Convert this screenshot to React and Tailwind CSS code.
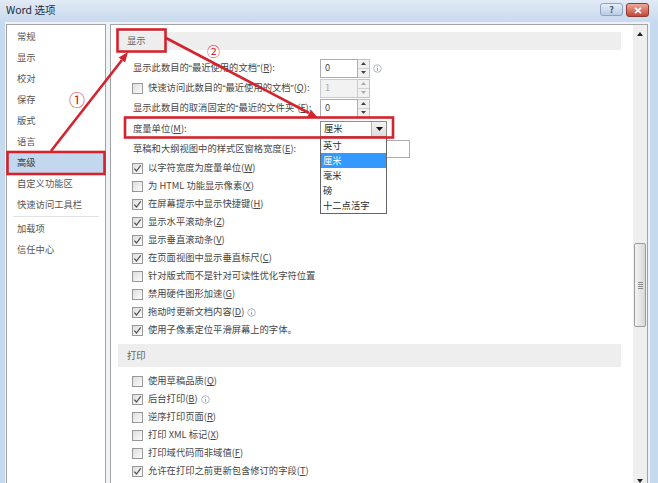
const cjk = "font-['Noto_Sans_CJK_SC',sans-serif]";

function K({ k }) {
  return (
    <>
      (<span className="underline">{k}</span>)
    </>
  );
}

function Q({ children }) {
  return <span className="font-['Liberation_Sans',sans-serif]">{children}</span>;
}

function Check({ on }) {
  return (
    <span className="flex h-[11px] w-[11px] shrink-0 items-center justify-center border border-[#979898] bg-gradient-to-br from-[#dedede] to-[#fbfbfb]">
      {on && (
        <svg width="9" height="9" viewBox="0 0 9 9">
          <path d="M1.4 4.6 L3.5 7 L7.7 1.4" fill="none" stroke="#505050" strokeWidth="1.2" />
        </svg>
      )}
    </span>
  );
}

function Info() {
  return (
    <svg width="9" height="9" viewBox="0 0 9 9" className="ml-[3px] shrink-0">
      <circle cx="4.5" cy="4.5" r="3.8" fill="none" stroke="#9aa7b8" strokeWidth="0.8" />
      <rect x="4.1" y="4" width="0.9" height="2.8" fill="#8a99ad" />
      <rect x="4.1" y="2.3" width="0.9" height="0.9" fill="#8a99ad" />
    </svg>
  );
}

function Spin({ value, disabled }) {
  return (
    <div className="flex h-[19px] w-[50px]">
      <div
        className={
          disabled
            ? "flex flex-1 items-center border border-[#c9cbd0] bg-[#f2f2f2] pl-[4px] text-[#a8a8a8]"
            : "flex flex-1 items-center border border-[#abadb3] bg-white pl-[4px]"
        }
      >
        {value}
      </div>
      <div className="flex w-[12px] flex-col border border-l-0 border-[#c2c2c2] bg-[#f1f1f1]">
        <div className="flex flex-1 items-center justify-center border-b border-[#d0d0d0]">
          <svg width="5" height="3" viewBox="0 0 5 3">
            <path d="M0 3 L2.5 0 L5 3 Z" fill={disabled ? "#aaaaaa" : "#444444"} />
          </svg>
        </div>
        <div className="flex flex-1 items-center justify-center">
          <svg width="5" height="3" viewBox="0 0 5 3">
            <path d="M0 0 L2.5 3 L5 0 Z" fill={disabled ? "#aaaaaa" : "#444444"} />
          </svg>
        </div>
      </div>
    </div>
  );
}

function CheckRow({ on, info, children }) {
  return (
    <div className="flex h-[18px] items-center pl-[14px]">
      <Check on={on} />
      <span className="ml-[5px] whitespace-nowrap">{children}</span>
      {info && <Info />}
    </div>
  );
}

const nav = ["常规", "显示", "校对", "保存", "版式", "语言", "高级", "自定义功能区", "快速访问工具栏"];

export default function App() {
  return (
    <div className={`relative h-[483px] w-[658px] overflow-hidden bg-[#c6daef] text-[9.3px] leading-none text-[#464646] ${cjk}`}>
      {/* title bar */}
      <div className="flex h-[22px] items-start bg-gradient-to-b from-[#e1eaf5] to-[#c9daee]">
        <span className="ml-[6px] mt-[5px] text-[10.5px] text-[#1d2b40]">Word 选项</span>
        <div className="ml-auto mr-[9px] mt-[3px] flex gap-[3px]">
          <div className="flex h-[13px] w-[23px] items-center justify-center rounded-[3px] border border-[#8ea3bf] bg-gradient-to-b from-[#e6eef8] to-[#b9cde5] text-[9px] font-bold text-[#3f587b]">
            ?
          </div>
          <div className="flex h-[14px] w-[23px] items-center justify-center rounded-[3px] border border-[#8d3b33] bg-gradient-to-b from-[#eba89c] to-[#c5443a]">
            <svg width="8" height="7" viewBox="0 0 8 7">
              <path d="M1 0.8 L7 6.2 M7 0.8 L1 6.2" stroke="#ffffff" strokeWidth="1.8" />
            </svg>
          </div>
        </div>
      </div>

      {/* body */}
      <div className="ml-[5px] mr-[8px] flex h-[468px] bg-[#eef3f9] pt-[2px]">
        {/* left nav */}
        <div className="ml-[1px] w-[100px] border border-[#a3a3a3] bg-white pt-[1px]">
          {nav.map((n) => (
            <div
              key={n}
              className={
                n === "高级"
                  ? "mx-[1px] flex h-[21px] items-center bg-[#c3d7ef] pl-[9px] text-[#3a3a3a]"
                  : "mx-[1px] flex h-[21px] items-center pl-[9px] text-[#555555]"
              }
            >
              {n}
            </div>
          ))}
          <div className="mx-[6px] my-[1px] h-px bg-[#e2e2e2]" />
          <div className="mx-[1px] flex h-[21px] items-center pl-[9px] text-[#555555]">加载项</div>
          <div className="mx-[1px] flex h-[21px] items-center pl-[9px] text-[#555555]">信任中心</div>
        </div>

        {/* right panel */}
        <div className="ml-[4px] mr-[2px] flex flex-1 border border-[#a3a3a3] bg-white">
          <div className="flex-1 pl-[7px] pr-[12px] pt-[7px]">
            <div className="flex h-[18px] items-center bg-[#eeeeee] pl-[9px] text-[#606060]">显示</div>

            <div className="mt-[8px]">
              <div className="flex h-[20px] items-center pl-[15px]">
                <span className="w-[187px] whitespace-nowrap">
                  显示此数目的<Q>“</Q>最近使用的文档<Q>”</Q>
                  <K k="R" />:
                </span>
                <Spin value="0" />
                <Info />
              </div>
              <div className="flex h-[20px] items-center pl-[14px]">
                <Check />
                <span className="ml-[5px] w-[172px] whitespace-nowrap">
                  快速访问此数目的<Q>“</Q>最近使用的文档<Q>”</Q>
                  <K k="Q" />:
                </span>
                <Spin value="1" disabled />
              </div>
              <div className="flex h-[20px] items-center pl-[15px]">
                <span className="w-[187px] whitespace-nowrap">
                  显示此数目的取消固定的<Q>“</Q>最近的文件夹<Q>”</Q>
                  <K k="F" />:
                </span>
                <Spin value="0" />
              </div>
              <div className="flex h-[21px] items-center pl-[15px]">
                <span className="w-[187px] whitespace-nowrap">
                  度量单位<K k="M" />:
                </span>
                <div className="flex h-[16px] w-[67px] border border-[#8e8e8e] bg-white">
                  <span className="flex flex-1 items-center pl-[3px] text-[#2a2a2a]">厘米</span>
                  <span className="flex w-[15px] items-center justify-center border-l border-[#b5b5b5] bg-gradient-to-b from-[#f4f4f4] to-[#dcdcdc]">
                    <svg width="7" height="4" viewBox="0 0 7 4">
                      <path d="M0 0 L3.5 4 L7 0 Z" fill="#111111" />
                    </svg>
                  </span>
                </div>
              </div>
              <div className="flex h-[20px] items-center pl-[15px]">
                <span className="w-[187px] whitespace-nowrap">
                  草稿和大纲视图中的样式区窗格宽度<K k="E" />:
                </span>
                <div className="h-[18px] w-[90px] border border-[#abadb3] bg-white" />
              </div>

              <CheckRow on>
                以字符宽度为度量单位<K k="W" />
              </CheckRow>
              <CheckRow>
                为 HTML 功能显示像素<K k="X" />
              </CheckRow>
              <CheckRow on>
                在屏幕提示中显示快捷键<K k="H" />
              </CheckRow>
              <CheckRow on>
                显示水平滚动条<K k="Z" />
              </CheckRow>
              <CheckRow on>
                显示垂直滚动条<K k="V" />
              </CheckRow>
              <CheckRow on>
                在页面视图中显示垂直标尺<K k="C" />
              </CheckRow>
              <CheckRow>针对版式而不是针对可读性优化字符位置</CheckRow>
              <CheckRow>
                禁用硬件图形加速<K k="G" />
              </CheckRow>
              <CheckRow on info>
                拖动时更新文档内容<K k="D" />
              </CheckRow>
              <CheckRow on>使用子像素定位平滑屏幕上的字体。</CheckRow>
            </div>

            <div className="mt-[5px] flex h-[23px] items-center bg-[#eeeeee] pl-[9px] text-[#606060]">打印</div>

            <div className="mt-[5px]">
              <CheckRow>
                使用草稿品质<K k="Q" />
              </CheckRow>
              <CheckRow on info>
                后台打印<K k="B" />
              </CheckRow>
              <CheckRow>
                逆序打印页面<K k="R" />
              </CheckRow>
              <CheckRow>
                打印 XML 标记<K k="X" />
              </CheckRow>
              <CheckRow>
                打印域代码而非域值<K k="F" />
              </CheckRow>
              <CheckRow on>
                允许在打印之前更新包含修订的字段<K k="T" />
              </CheckRow>
            </div>
          </div>

          {/* scrollbar */}
          <div className="flex w-[14px] flex-col bg-[#f0eff0]">
            <div className="flex h-[17px] items-center justify-center">
              <svg width="6" height="4" viewBox="0 0 6 4">
                <path d="M0 4 L3 0 L6 4 Z" fill="#222222" />
              </svg>
            </div>
            <div className="h-[201px]" />
            <div className="mx-[1px] flex h-[84px] items-center justify-center rounded-[2px] border border-[#9c9c9c] bg-gradient-to-r from-[#f3f3f3] to-[#d8d8d8]">
              <div className="flex flex-col gap-[1px]">
                <div className="h-px w-[5px] bg-[#8a8a8a]" />
                <div className="h-px w-[5px] bg-[#8a8a8a]" />
                <div className="h-px w-[5px] bg-[#8a8a8a]" />
                <div className="h-px w-[5px] bg-[#8a8a8a]" />
              </div>
            </div>
            <div className="flex-1" />
            <div className="flex h-[17px] items-center justify-center">
              <svg width="6" height="4" viewBox="0 0 6 4">
                <path d="M0 0 L3 4 L6 0 Z" fill="#222222" />
              </svg>
            </div>
          </div>
        </div>
      </div>

      {/* open dropdown list */}
      <div className="absolute left-[320px] top-[137px] w-[67px] border border-[#646464] bg-white text-[#2a2a2a]">
        <div className="flex h-[15px] items-center pl-[2px]">英寸</div>
        <div className="flex h-[15px] items-center bg-[#3399ff] pl-[2px] text-white">厘米</div>
        <div className="flex h-[15px] items-center pl-[2px]">毫米</div>
        <div className="flex h-[15px] items-center pl-[2px]">磅</div>
        <div className="flex h-[15px] items-center pl-[2px]">十二点活字</div>
      </div>

      {/* red annotations */}
      <svg className="pointer-events-none absolute left-0 top-0" width="658" height="483" viewBox="0 0 658 483">
        <g fill="none" stroke="#d3232c" strokeWidth="2.6">
          <rect x="7.5" y="152" width="97" height="22" />
          <rect x="117.5" y="29.5" width="48" height="22" />
          <rect x="125" y="117.5" width="268" height="20" />
          <line x1="51" y1="151" x2="122" y2="60" />
          <line x1="166" y1="38" x2="309" y2="113" />
        </g>
        <g fill="#d3232c">
          <polygon points="128,52 125.1,62.4 118.7,57.5" />
          <polygon points="318,118 307.3,116.9 311,109.8" />
        </g>
      </svg>
      <span className="absolute left-[69px] top-[91px] text-[16px] leading-none text-[#d3232c]">①</span>
      <span className="absolute left-[207px] top-[44px] text-[13px] leading-none text-[#d3232c]">②</span>
    </div>
  );
}
